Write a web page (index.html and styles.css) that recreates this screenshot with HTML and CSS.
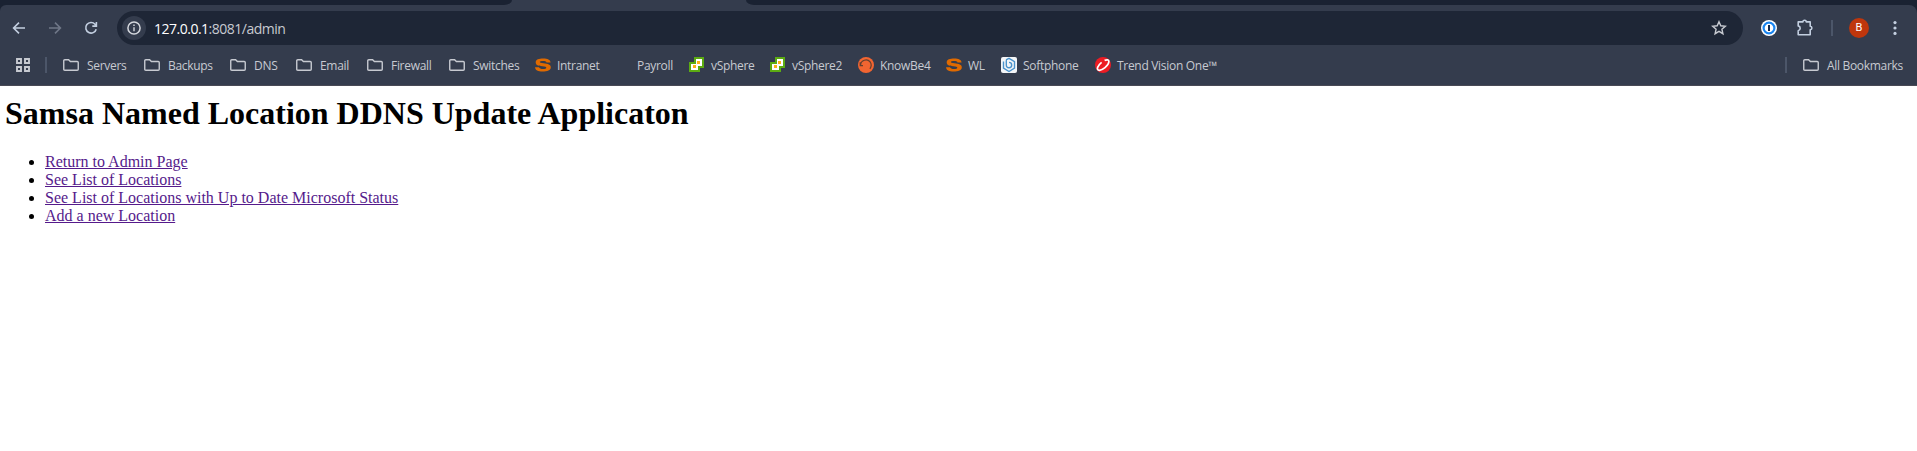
FILE: index.html
```html
<!DOCTYPE html>
<html lang="en">
<head>
<meta charset="utf-8">
<title>Samsa Named Location DDNS Update</title>
<link rel="stylesheet" href="styles.css">
</head>
<body>
<svg class="defs" width="0" height="0">
  <symbol id="folder" viewBox="0 0 16 12"><path d="M.75 10.2V1.8Q.75.75 1.8.75H5.6L7.4 2.5H14.2Q15.25 2.5 15.25 3.5V10.2Q15.25 11.25 14.2 11.25H1.8Q.75 11.25.75 10.2Z" fill="none" stroke="currentColor" stroke-width="1.4"/></symbol>
  <symbol id="samsa" viewBox="0 0 16 14"><path d="M15.6 4.6H11.6C11.2 3.3 9.8 3 8 3 6.2 3 4.8 3.2 4.8 4.1 4.8 4.9 6 5 8.5 5.3 13 5.8 15.8 6.6 15.8 9.2 15.8 12.6 12.2 13.4 7.6 13.4 3 13.4.3 12.4 0 9.2H4C4.4 10.6 6 10.9 8 10.9 10 10.9 11.3 10.6 11.3 9.7 11.3 8.8 10 8.6 7.4 8.3 3 7.9.7 7 .7 4.5.7 1.5 4 .6 8.2.6 12.6.6 15.2 1.6 15.6 4.6Z" fill="#e06a00"/></symbol>
  <symbol id="vsphere" viewBox="0 0 15 15"><path d="M5 0H15V11H11V15H0V5H5Z" fill="#5cab12"/><path d="M7 2H13V9H9V13H2V7H7Z" fill="#fff"/><path d="M8 4h3v3H8zM4 8h3v3H4z" fill="#fcb017"/></symbol>
</svg>
<header class="browser">
  <div class="tabstrip"><div class="strip strip-left"></div><div class="tab"></div><div class="strip strip-right"></div></div>
  <div class="chrome">
    <div class="toolbar">
      <svg class="nav" viewBox="0 0 14 14"><path d="M13 7H2M7 1.6L1.6 7 7 12.4" /></svg>
      <svg class="nav dim" viewBox="0 0 14 14"><path d="M1 7H12M7 1.6L12.4 7 7 12.4" /></svg>
      <svg class="nav" viewBox="0 0 14 14"><path d="M12.2 8.2A5.3 5.3 0 1 1 11 3.2L12.4 4.9M12.4 1V5.1H8.3" /></svg>
      <div class="omnibox">
        <span class="site-info"><svg width="14" height="14" viewBox="0 0 14 14"><circle cx="7" cy="7" r="6.1" fill="none" stroke="currentColor" stroke-width="1.5"/><path d="M7 6.2V10.3M7 3.6V5" stroke="currentColor" stroke-width="1.4"/></svg></span>
        <span class="url"><b>127.0.0.1</b>:8081/admin</span>
        <svg class="star" viewBox="0 0 16 16"><path d="M8 1.7L9.8 5.8 14.3 6.2 10.9 9.2 11.9 13.7 8 11.3 4.1 13.7 5.1 9.2 1.7 6.2 6.2 5.8Z" fill="none" stroke="currentColor" stroke-width="1.4"/></svg>
      </div>
      <svg class="onepass" viewBox="0 0 16 16"><circle cx="8" cy="8" r="8" fill="#fff"/><circle cx="8" cy="8" r="5.4" fill="#fff" stroke="#1a85f0" stroke-width="2.2"/><path d="M8 5V11" stroke="#172b4d" stroke-width="2"/></svg>
      <svg class="puzzle" viewBox="0 0 17 17"><path d="M1.2 2.9H5.9A1.7 1.7 0 0 1 9.3 2.9H13.2V7.3A1.7 1.7 0 0 1 13.2 10.7V15.7H1.2V11.8A2.5 2.5 0 0 0 1.2 6.9Z" fill="none" stroke="currentColor" stroke-width="1.6" stroke-linejoin="round"/></svg>
      <span class="divider"></span>
      <span class="avatar">B</span>
      <svg class="dots" viewBox="0 0 4 16"><circle cx="2" cy="2.6" r="1.6"/><circle cx="2" cy="8" r="1.6"/><circle cx="2" cy="13.4" r="1.6"/></svg>
    </div>
    <nav class="bookmarks">
      <svg class="apps" viewBox="0 0 14 14"><path d="M1 1H5V5H1ZM9 1H13V5H9ZM1 9H5V13H1ZM9 9H13V13H9Z" fill="none" stroke="currentColor" stroke-width="1.9"/></svg>
      <span class="bar"></span>
      <div class="list">
        <a class="item folder"><svg><use href="#folder"/></svg>Servers</a>
        <a class="item folder"><svg><use href="#folder"/></svg>Backups</a>
        <a class="item folder"><svg><use href="#folder"/></svg>DNS</a>
        <a class="item folder"><svg><use href="#folder"/></svg>Email</a>
        <a class="item folder"><svg><use href="#folder"/></svg>Firewall</a>
        <a class="item folder"><svg><use href="#folder"/></svg>Switches</a>
        <a class="item"><svg class="samsa"><use href="#samsa"/></svg>Intranet</a>
        <a class="item blank"><svg></svg>Payroll</a>
        <a class="item"><svg class="vs"><use href="#vsphere"/></svg>vSphere</a>
        <a class="item"><svg class="vs"><use href="#vsphere"/></svg>vSphere2</a>
        <a class="item"><svg viewBox="0 0 16 16"><circle cx="8" cy="8" r="8" fill="#f26531"/><path d="M2.2 5.2V8.6H5M2.6 8.2A5.4 5.4 0 0 1 12.2 5Q14.4 8.4 11.9 11.8" fill="none" stroke="#64402f" stroke-width="1.2"/></svg>KnowBe4</a>
        <a class="item"><svg class="samsa"><use href="#samsa"/></svg>WL</a>
        <a class="item"><svg viewBox="0 0 16 16"><rect width="16" height="16" rx="2" fill="#f4f6f8"/><path d="M5 2.8L8 1.4 13.5 4.6V11.2L8 14.5 2.5 11.2V4.6M5.3 3.2V8.3A2.7 2.7 0 1 0 8 5.4" fill="none" stroke="#4b93cc" stroke-width="1.4"/></svg>Softphone</a>
        <a class="item"><svg viewBox="0 0 16 16"><circle cx="8" cy="8" r="8" fill="#ec1c24"/><path d="M6.6 5.4C3 8.2 1 12.6 3.6 13.2 7.2 14 13.6 8.4 13.9 4.8 14 2.6 12 2.4 9.6 3.4" fill="none" stroke="#fff" stroke-width="1.7"/></svg>Trend Vision One™</a>
      </div>
      <span class="bar end"></span>
      <a class="item folder all"><svg><use href="#folder"/></svg>All Bookmarks</a>
    </nav>
  </div>
</header>
<main class="page">
  <h1>Samsa Named Location DDNS Update Applicaton</h1>
  <ul>
    <li><a href="#">Return to Admin Page</a></li>
    <li><a href="#">See List of Locations</a></li>
    <li><a href="#">See List of Locations with Up to Date Microsoft Status</a></li>
    <li><a href="#">Add a new Location</a></li>
  </ul>
</main>
</body>
</html>
```
FILE: styles.css
```css
* { box-sizing: border-box; }
body { margin: 0; background: #fff; overflow: hidden; }
svg { display: block; flex: none; }
.defs { position: absolute; }

.browser { height: 86px; background: #1a2232; font-family: "Open Sans", "Noto Sans", sans-serif; color: #c7cad1; }
.tabstrip { display: flex; height: 5px; background: #343c4d; }
.strip { background: #1a2232; }
.strip-left { width: 512px; border-bottom-right-radius: 8px 5px; }
.tab { width: 234px; }
.strip-right { flex: 1; border-bottom-left-radius: 8px 5px; }
.chrome { height: 81px; background: #343c4d; border-radius: 6px 8px 0 0; border-bottom: 1px solid #494a55; }

.toolbar { display: flex; align-items: center; height: 46px; padding-left: 12px; }
.nav { width: 14px; height: 14px; margin-right: 22px; fill: none; stroke: #c3cfe0; stroke-width: 1.6; }
.nav.dim { stroke: #6f7787; }
.omnibox { display: flex; align-items: center; width: 1626px; height: 34px; margin-left: -3px; padding: 0 16px 0 5px; border-radius: 17px; background: #1e2636; }
.site-info { display: grid; place-items: center; width: 24px; height: 24px; border-radius: 50%; background: #343c4d; color: #d5d8de; }
.url { flex: 1; margin-left: 8px; font-size: 14px; letter-spacing: -.5px; white-space: nowrap; }
.url b { font-weight: 400; color: #fff; }
.star { width: 16px; height: 16px; }
.onepass { width: 16px; height: 16px; margin-left: 18px; }
.puzzle { width: 17px; height: 17px; margin: -1px 0 0 20px; color: #c3cfe0; }
.divider { width: 2px; height: 16px; margin-left: 17px; background: #4c5669; }
.avatar { width: 20px; height: 20px; margin-left: 16px; border-radius: 50%; background: #bf360c; color: #fff; font: 11px/20px Roboto, sans-serif; text-align: center; }
.dots { width: 4px; height: 16px; margin-left: 24px; fill: #c3cfe0; }

.bookmarks { display: flex; align-items: center; height: 28px; padding: 0 14px 0 16px; font-size: 12px; letter-spacing: -.3px; }
.apps { width: 14px; height: 14px; }
.bar { flex: none; width: 2px; height: 16px; margin-left: 15px; background: #4c5669; }
.list { display: grid; grid-template-columns: 81px 86px 66px 71px 82px 86px 82px 72px 81px 88px 88px 55px 94px 130px; margin-left: 16px; }
.item { display: flex; align-items: center; gap: 6px; white-space: nowrap; }
.item svg { width: 16px; height: 16px; }
.item.folder { gap: 8px; }
.item.folder svg { height: 12px; }
.item.blank { gap: 4px; }
.item .samsa { height: 14px; margin-top: -1px; }
.item .vs { width: 15px; height: 15px; margin: -1px 1px 0 0; }
.bar.end { margin-left: auto; }
.all { margin-left: 16px; }

.page { padding: 9px 5px; font: 16px/18px "Liberation Serif", "Times New Roman", serif; color: #000; }
.page h1 { margin: 0 0 21px; font-size: 32px; line-height: 37px; }
.page ul { margin: 0; padding-left: 40px; }
.page a { color: #551a8b; }
```
